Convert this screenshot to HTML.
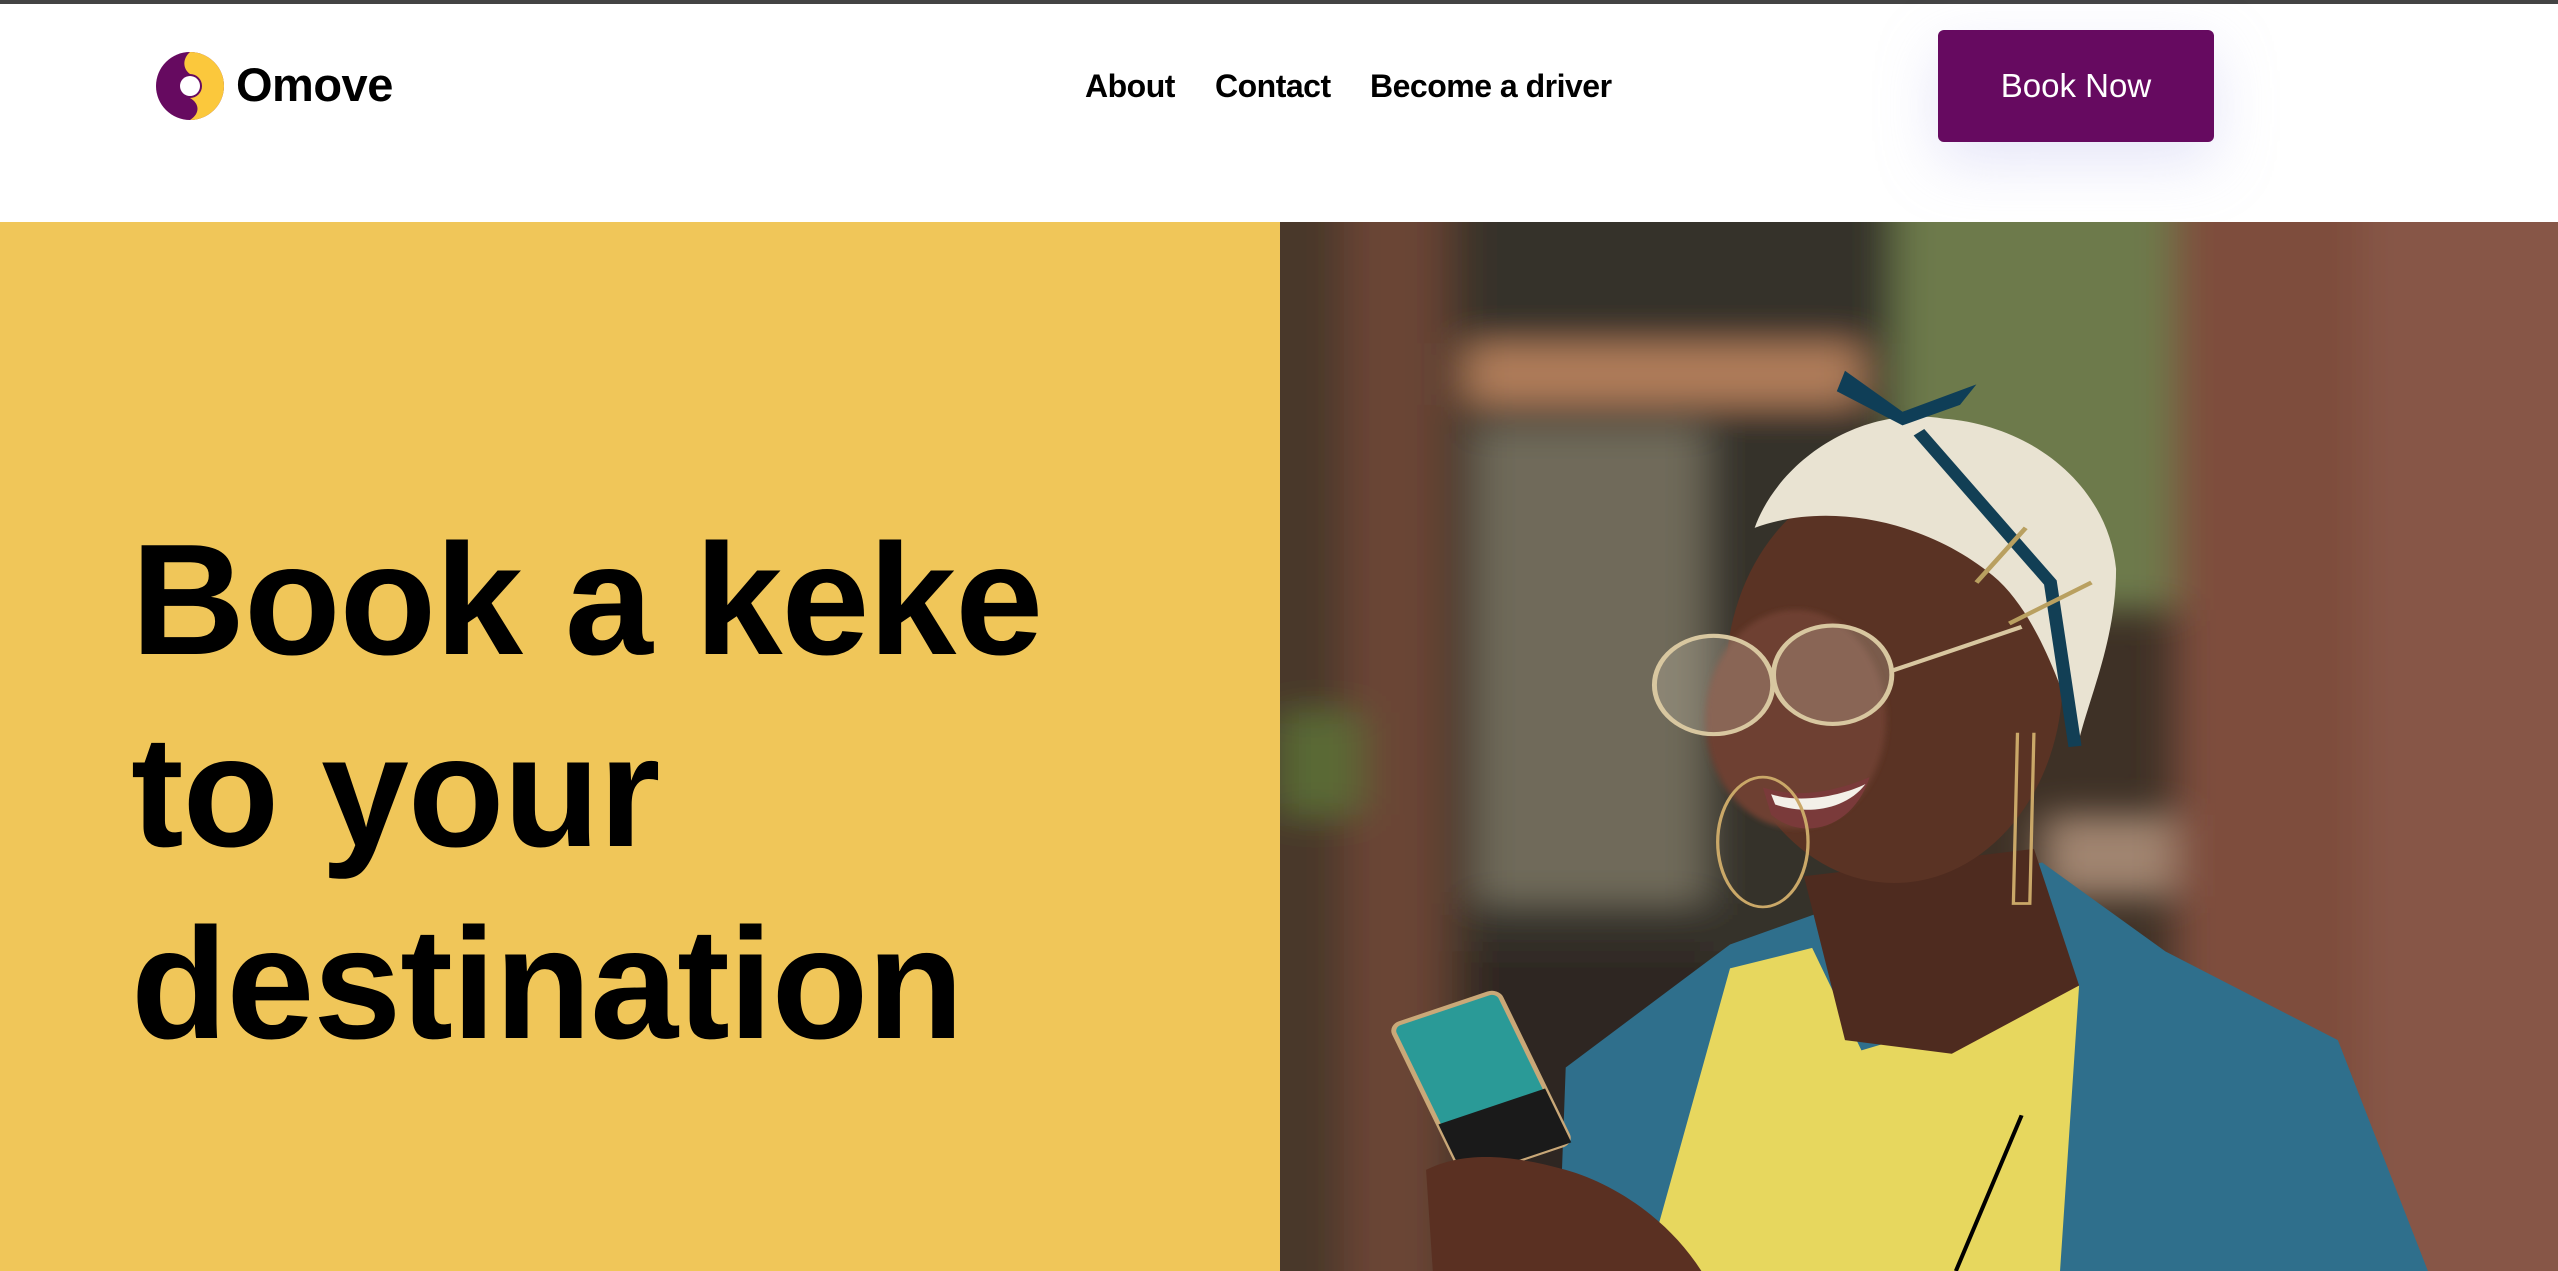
<!DOCTYPE html>
<html><head><meta charset="utf-8"><style>
*{margin:0;padding:0;box-sizing:border-box}
html,body{width:2558px;height:1271px;overflow:hidden;background:#fff;font-family:"Liberation Sans",sans-serif}
.topbar{position:absolute;left:0;top:0;width:2558px;height:4px;background:#444}
.logo{position:absolute;left:155px;top:51px;width:70px;height:70px}
.brand{position:absolute;left:236px;top:58px;font-size:47px;font-weight:bold;color:#000;line-height:54px;letter-spacing:-0.5px}
.nav{position:absolute;top:66px;font-size:32px;font-weight:bold;color:#000;line-height:40px;letter-spacing:-0.5px}
.btn{position:absolute;left:1938px;top:30px;width:276px;height:112px;background:#660a60;border-radius:6px;color:#fff;font-size:33px;line-height:112px;text-align:center;box-shadow:0 20px 60px rgba(180,180,235,0.35)}
.hero{position:absolute;left:0;top:222px;width:1280px;height:1049px;background:#f0c659}
h1{position:absolute;left:131px;top:0;font-size:158px;font-weight:bold;line-height:192px;color:#000;letter-spacing:-1px}
.photo{position:absolute;left:1280px;top:222px;width:1278px;height:1049px;overflow:hidden}
.photo svg{position:absolute;left:-10px;top:-22px;width:1288px;height:1071px}
</style></head><body>
<div class="topbar"></div>
<svg class="logo" viewBox="0 0 70 70">
<circle cx="35" cy="35" r="34" fill="#660a60"/>
<path d="M35 1 A34 34 0 0 1 35 69 C46 62 44 52 35 47 A12 12 0 0 0 35 23 C28 18 27 8 35 1Z" fill="#fbc83c"/>
<circle cx="35" cy="35" r="10" fill="#fff"/>
</svg>
<div class="brand">Omove</div>
<div class="nav" style="left:1085px">About</div>
<div class="nav" style="left:1215px">Contact</div>
<div class="nav" style="left:1370px">Become a driver</div>
<div class="btn">Book Now</div>
<div class="hero"><h1 style="top:282px">Book a keke</h1><h1 style="top:474px">to your</h1><h1 style="top:666px">destination</h1></div>
<div class="photo">
<svg viewBox="0 0 1568 1568" preserveAspectRatio="none">
<defs>
<filter id="b" x="-20%" y="-20%" width="140%" height="140%"><feGaussianBlur stdDeviation="25"/></filter>
<filter id="s"><feGaussianBlur stdDeviation="4"/></filter>
</defs>
<rect x="0" y="0" width="1568" height="1568" fill="#3e3126"/>
<g filter="url(#b)">
<rect x="-50" y="-50" width="292" height="1700" fill="#4a372b"/>
<rect x="90" y="-50" width="120" height="1700" fill="#6a4434"/>
<rect x="240" y="-50" width="560" height="1700" fill="#35302a"/>
<rect x="250" y="330" width="280" height="700" fill="#6f6a5a"/>
<rect x="760" y="-50" width="340" height="650" fill="#6d7a4c"/>
<rect x="240" y="210" width="480" height="90" fill="#b07d5a"/>
<rect x="940" y="900" width="160" height="120" fill="#a08470"/>
<rect x="12" y="750" width="100" height="150" fill="#5a6a35"/>
<rect x="1100" y="-50" width="520" height="1700" fill="#7e4e3e"/>
<rect x="1330" y="-50" width="290" height="1700" fill="#875646"/>
<rect x="240" y="1100" width="300" height="500" fill="#2e2620"/>
</g>
<path d="M350 1600 L360 1270 L560 1090 L700 1030 L940 970 L1090 1100 L1300 1230 L1420 1600 Z" fill="#2f6f8c"/>
<path d="M450 1600 L560 1125 L660 1095 L720 1245 L985 1150 L960 1600 Z" fill="#e7d75e"/>
<path d="M650 990 L930 950 L985 1150 L830 1250 L700 1230 Z" fill="#4e2b1f"/>
<ellipse cx="760" cy="700" rx="205" ry="300" fill="#5a3324"/>
<ellipse cx="640" cy="760" rx="110" ry="160" fill="#6e4030" filter="url(#s)"/>
<path d="M590 480 C620 380 720 300 820 320 C930 330 1020 420 1030 540 C1030 640 1000 720 985 790 C960 700 930 600 880 550 C800 470 680 440 590 480Z" fill="#e9e3d2"/>
<path d="M790 340 L950 560 L980 800" stroke="#123f55" stroke-width="16" fill="none"/>
<path d="M700 250 L770 310 L860 270 L840 300 L770 330 L690 280Z" fill="#0f3e57"/>
<path d="M860 560 L920 480 M900 620 L1000 560" stroke="#b9a060" stroke-width="6"/>
<circle cx="540" cy="710" r="72" fill="rgba(220,210,190,0.25)" stroke="#d8c7a0" stroke-width="6"/>
<circle cx="685" cy="695" r="72" fill="rgba(220,210,190,0.25)" stroke="#d8c7a0" stroke-width="6"/>
<path d="M755 690 L915 625" stroke="#d8c7a0" stroke-width="6"/>
<path d="M600 860 C650 880 700 860 730 845 C710 920 650 940 610 900Z" fill="#7a3a3a"/>
<path d="M610 870 C650 885 700 870 725 855 C700 895 650 900 615 885Z" fill="#f3f0e8"/>
<ellipse cx="600" cy="940" rx="55" ry="95" fill="none" stroke="#caa868" stroke-width="4"/>
<path d="M910 780 L905 1030 L925 1030 L930 780" stroke="#caa868" stroke-width="4" fill="none"/>
<g transform="rotate(-22 255 1290)">
<rect x="185" y="1175" width="140" height="240" rx="12" fill="#2a9a97" stroke="#c9a878" stroke-width="6"/>
<rect x="185" y="1330" width="140" height="85" fill="#1a1a1a"/>
</g>
<path d="M190 1420 C240 1390 300 1400 360 1420 C420 1440 500 1500 540 1600 L200 1600 Z" fill="#5a3022"/>
<line x1="915" y1="1340" x2="835" y2="1568" stroke="#000" stroke-width="5"/>
</svg>
</div>
</body></html>
